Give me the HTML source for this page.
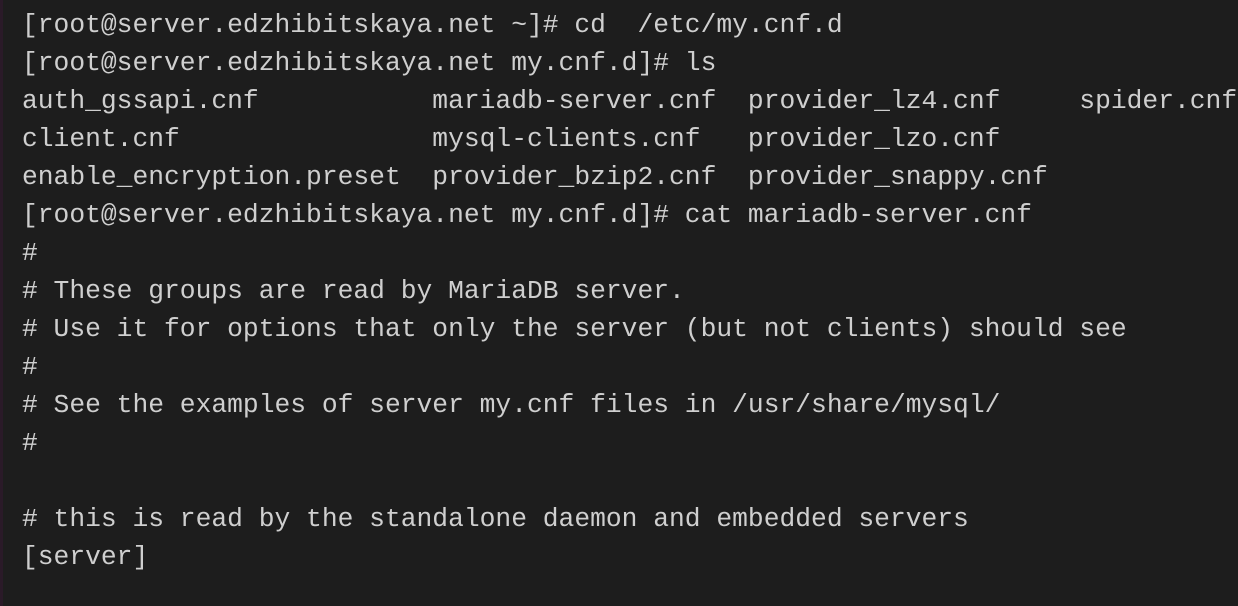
<!DOCTYPE html>
<html><head><style>
html,body{margin:0;padding:0;}
body{width:1238px;height:606px;background:#1d1d1d;overflow:hidden;position:relative;}
.strip{position:absolute;left:0;top:0;width:3px;height:606px;background:#2a1a28;}
pre{position:absolute;left:22px;top:6px;margin:0;font-family:"Liberation Mono","DejaVu Sans Mono",monospace;font-size:26.3px;line-height:38px;color:#cfcfcf;letter-spacing:0;}
</style></head><body>
<div class="strip"></div>
<pre>[root@server.edzhibitskaya.net ~]# cd  /etc/my.cnf.d
[root@server.edzhibitskaya.net my.cnf.d]# ls
auth_gssapi.cnf           mariadb-server.cnf  provider_lz4.cnf     spider.cnf
client.cnf                mysql-clients.cnf   provider_lzo.cnf
enable_encryption.preset  provider_bzip2.cnf  provider_snappy.cnf
[root@server.edzhibitskaya.net my.cnf.d]# cat mariadb-server.cnf
#
# These groups are read by MariaDB server.
# Use it for options that only the server (but not clients) should see
#
# See the examples of server my.cnf files in /usr/share/mysql/
#

# this is read by the standalone daemon and embedded servers
[server]</pre>
</body></html>
